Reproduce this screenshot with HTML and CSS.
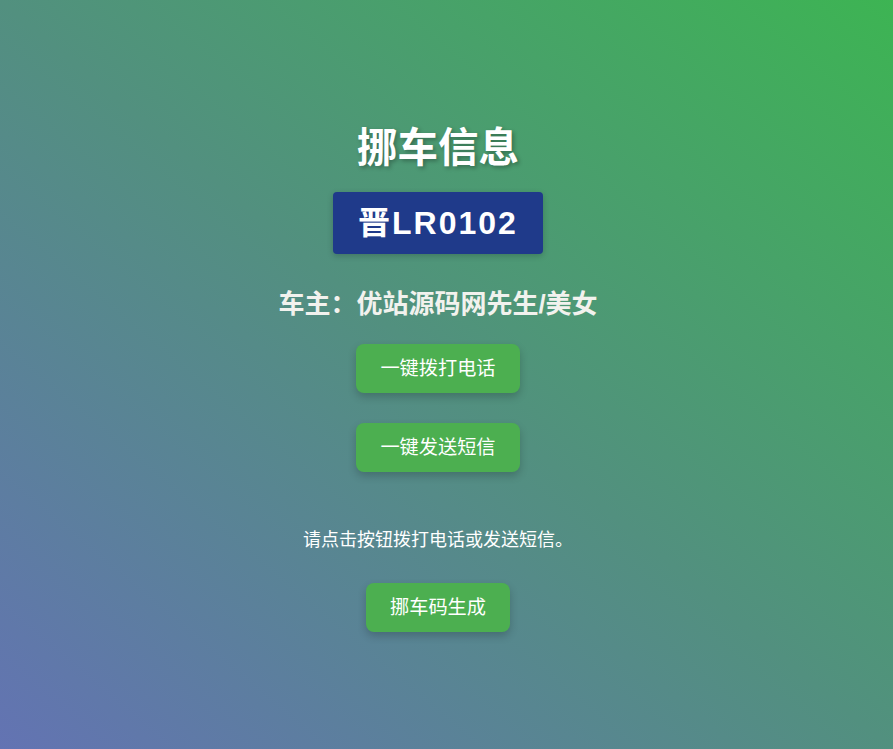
FILE: index.html
```html
<!DOCTYPE html>
<html lang="zh-CN">
<head>
    <meta charset="UTF-8">
    <meta name="viewport" content="width=device-width, initial-scale=1.0">
    <title>挪车信息</title>
    <link rel="stylesheet" href="styles.css">
</head>
<body>
    <div class="container">
        <h1 class="title">挪车信息</h1>
        <div class="plate">晋LR0102</div>
        <div class="owner">车主：优站源码网先生/美女</div>
        <button class="btn">一键拨打电话</button>
        <button class="btn second">一键发送短信</button>
        <p class="tip">请点击按钮拨打电话或发送短信。</p>
        <button class="btn">挪车码生成</button>
    </div>
</body>
</html>
```

FILE: styles.css
```css
html, body {
    height: 100%;
}
body {
    margin: 0;
    padding-right: 17px;
    font-family: 'Liberation Sans', 'Noto Sans CJK SC', sans-serif;
    background: linear-gradient(to top right, #6373b3, #52907f 50%, #3db453);
    color: #ffffff;
    display: flex;
    align-items: center;
    justify-content: center;
    overflow: hidden;
}
.container {
    display: flex;
    flex-direction: column;
    align-items: center;
    margin-top: 7px;
}
.title {
    margin: 0;
    font-size: 40.5px;
    line-height: 48px;
    font-weight: bold;
    text-shadow: 2px 2px 4px rgba(0, 0, 0, 0.3);
}
.plate {
    margin-top: 20px;
    background-color: #1f3a8a;
    padding: 12px 25px;
    font-size: 32px;
    line-height: 38px;
    font-weight: bold;
    letter-spacing: 2px;
    border-radius: 4px;
    box-shadow: 0 2px 6px rgba(0, 0, 0, 0.2);
}
.owner {
    margin-top: 33px;
    font-size: 26px;
    line-height: 34px;
    font-weight: bold;
    color: #f2f2ee;
}
.btn {
    margin-top: 23px;
    background-color: #4caf50;
    color: #ffffff;
    border: none;
    border-radius: 8px;
    padding: 12px 24px;
    font-family: inherit;
    font-size: 19.2px;
    line-height: 25px;
    box-shadow: 0 4px 8px rgba(0, 0, 0, 0.2);
    cursor: pointer;
}
.btn.second {
    margin-top: 30px;
}
.tip {
    margin: 56px 0 30px;
    font-size: 18px;
    line-height: 25px;
}
.tip + .btn {
    margin-top: 0;
}
```
